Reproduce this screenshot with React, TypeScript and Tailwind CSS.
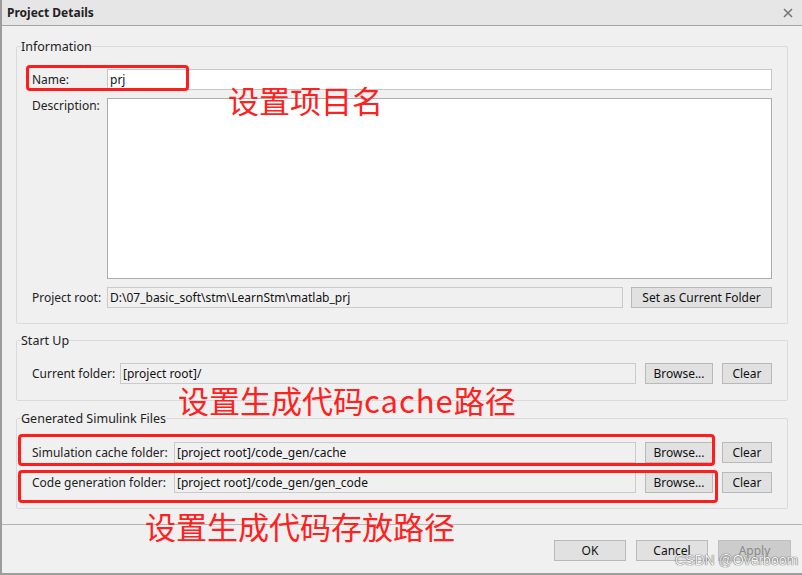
import type { ReactNode } from "react"

const ui = { fontFamily: '"Noto Sans", "Open Sans", sans-serif' }
const cjk = { fontFamily: '"Noto Sans CJK SC", "Noto Sans", sans-serif' }

function Group({ title, children, className }: { title: string; children: ReactNode; className?: string }) {
    return (
        <fieldset className={`border border-[#dadada] rounded-[2px] pl-[15px] pr-[15px] ${className ?? ""}`}>
            <legend className="ml-[-11px] text-[12.5px] leading-[17px] text-[#222]">{title}</legend>
            {children}
        </fieldset>
    )
}

function Btn({ children, className, disabled }: { children: ReactNode; className?: string; disabled?: boolean }) {
    return (
        <button
            className={`h-[21px] border text-[12px] leading-none ${disabled ? "bg-[#cccccc] border-[#bfbfbf] text-[#8a8a8a]" : "bg-[#e1e1e1] border-[#b9b9b9] text-[#111]"} ${className ?? ""}`}
        >
            {children}
        </button>
    )
}

function Field({ value, white, className }: { value?: string; white?: boolean; className?: string }) {
    return (
        <div
            className={`h-[21px] border flex items-center pl-[2px] text-[12px] text-[#111] ${white ? "bg-white border-[#c6c6c6]" : "bg-[#f0f0f0] border-[#cacaca]"} ${className ?? ""}`}
        >
            {value}
        </div>
    )
}

export default function App() {
    return (
        <div style={ui} className="relative w-[802px] h-[575px] bg-[#f0f0f0] border-l-2 border-b-2 border-[#9c9c9c] overflow-hidden">
            {/* title bar */}
            <div className="h-[26px] bg-[#e6e6e6] border-b border-[#a4a4a4] flex items-center justify-between pl-[5px] pr-[8px]">
                <span className="text-[12px] font-bold text-[#222]">Project Details</span>
                <svg width="10" height="10" viewBox="0 0 10 10" className="mr-[1px]">
                    <path d="M1 1L9 9M9 1L1 9" stroke="#777" strokeWidth="1.6" />
                </svg>
            </div>

            <div className="pl-[14px] pr-[14px] pt-[12px] flex flex-col">
                <Group title="Information" className="pb-[15px]">
                    <div className="pt-[14px] flex flex-col gap-[8px] text-[12px] text-[#222]">
                        <div className="flex items-center">
                            <span className="w-[75px]">Name:</span>
                            <Field white value="prj" className="flex-1" />
                        </div>
                        <div className="flex items-start">
                            <span className="w-[75px] mt-[-1px]">Description:</span>
                            <div className="flex-1 h-[181px] bg-white border border-[#acacac]" />
                        </div>
                        <div className="flex items-center">
                            <span className="w-[75px]">Project root:</span>
                            <Field value="D:\07_basic_soft\stm\LearnStm\matlab_prj" className="flex-1" />
                            <Btn className="ml-[8px] w-[141px]">Set as Current Folder</Btn>
                        </div>
                    </div>
                </Group>

                <Group title="Start Up" className="mt-[8px] pb-[16px]">
                    <div className="pt-[14px] flex items-center text-[12px] text-[#222]">
                        <span className="w-[88px]">Current folder:</span>
                        <Field value="[project root]/" className="flex-1" />
                        <Btn className="ml-[9px] w-[68px]">Browse...</Btn>
                        <Btn className="ml-[9px] w-[50px]">Clear</Btn>
                    </div>
                </Group>

                <Group title="Generated Simulink Files" className="mt-[9px] pb-[15px]">
                    <div className="pt-[15px] flex flex-col gap-[9px] text-[12px] text-[#222]">
                        <div className="flex items-center">
                            <span className="w-[142px]">Simulation cache folder:</span>
                            <Field value="[project root]/code_gen/cache" className="flex-1" />
                            <Btn className="ml-[9px] w-[68px]">Browse...</Btn>
                            <Btn className="ml-[9px] w-[50px]">Clear</Btn>
                        </div>
                        <div className="flex items-center">
                            <span className="w-[142px]">Code generation folder:</span>
                            <Field value="[project root]/code_gen/gen_code" className="flex-1" />
                            <Btn className="ml-[9px] w-[68px]">Browse...</Btn>
                            <Btn className="ml-[9px] w-[50px]">Clear</Btn>
                        </div>
                    </div>
                </Group>
            </div>

            {/* footer */}
            <div className="mt-[15px] border-t border-[#b4b4b4] flex justify-end gap-[10px] pr-[11px] pt-[15px]">
                <Btn className="w-[72px]">OK</Btn>
                <Btn className="w-[72px]">Cancel</Btn>
                <Btn disabled className="w-[73px]">Apply</Btn>
            </div>

            {/* red annotations */}
            <div className="absolute left-[24px] top-[65px] w-[163px] h-[26px] border-[3px] border-[#ff1c1c] rounded-[4px]" />
            <div className="absolute left-[16px] top-[434px] w-[697px] h-[32px] border-[3px] border-[#ff1c1c] rounded-[4px]" />
            <div className="absolute left-[16px] top-[470px] w-[700px] h-[33px] border-[3px] border-[#ff1c1c] rounded-[4px]" />
            <div style={cjk} className="absolute left-[226px] top-[84px] text-[31px] leading-none text-[#ff2020]">设置项目名</div>
            <div style={cjk} className="absolute left-[176px] top-[384px] text-[31px] leading-none text-[#ff2020]">
                设置生成代码<span className="tracking-[1px]">cache</span>路径
            </div>
            <div style={cjk} className="absolute left-[143px] top-[510px] text-[31px] leading-none text-[#ff2020]">设置生成代码存放路径</div>

            <div className="absolute left-[673px] top-[550px] text-[14px] text-[#f4f4f4] [text-shadow:0_0_1px_#555,0_0_1px_#555]" style={{ fontFamily: '"Liberation Sans", sans-serif' }}>
                CSDN @Overboom
            </div>
        </div>
    )
}
